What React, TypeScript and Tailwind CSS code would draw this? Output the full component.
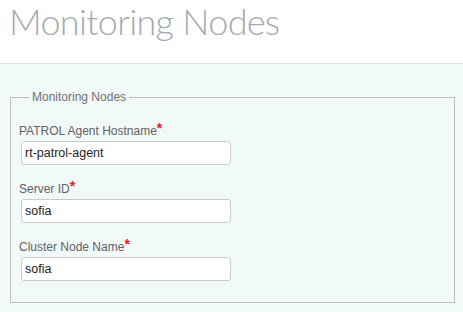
export default function App() {
  const fields = [
    { label: "PATROL Agent Hostname", value: "rt-patrol-agent" },
    { label: "Server ID", value: "sofia" },
    { label: "Cluster Node Name", value: "sofia" },
  ];

  return (
    <div className="min-h-[312px] bg-[#f2f9f9] font-['Liberation_Sans',Arial,sans-serif]">
      <header className="h-[64px] border-b border-[#e3e3e3] bg-white pl-[9px]">
        <h1 className="font-['Lato',sans-serif] text-[36px] font-light leading-[42px] tracking-[-0.7px] text-[#a5aab1]">
          Monitoring Nodes
        </h1>
      </header>

      <div className="pl-[10px] pr-[8px] pt-[25px]">
        <fieldset className="border border-[#bdbdbd] px-[8px] pb-[21px] pt-[18px]">
          <legend className="ml-[10px] px-[3px] text-[12px] leading-[16px] text-[#707070]">
            Monitoring Nodes
          </legend>
          <div className="flex flex-col gap-[16px]">
            {fields.map((f) => (
              <div key={f.label} className="flex flex-col gap-[2px]">
                <label className="text-[12px] leading-[16px] text-[#626262]">
                  {f.label}
                  <span className="relative -top-[2px] align-top text-[14px] font-bold leading-none text-[#f2141e]">*</span>
                </label>
                <input
                  readOnly
                  value={f.value}
                  className="ml-[2px] h-[24px] w-[210px] rounded-[3px] border border-[#cacaca] bg-white px-[3px] text-[12.5px] text-[#1e1e1e] outline-none"
                />
              </div>
            ))}
          </div>
        </fieldset>
      </div>
    </div>
  );
}
